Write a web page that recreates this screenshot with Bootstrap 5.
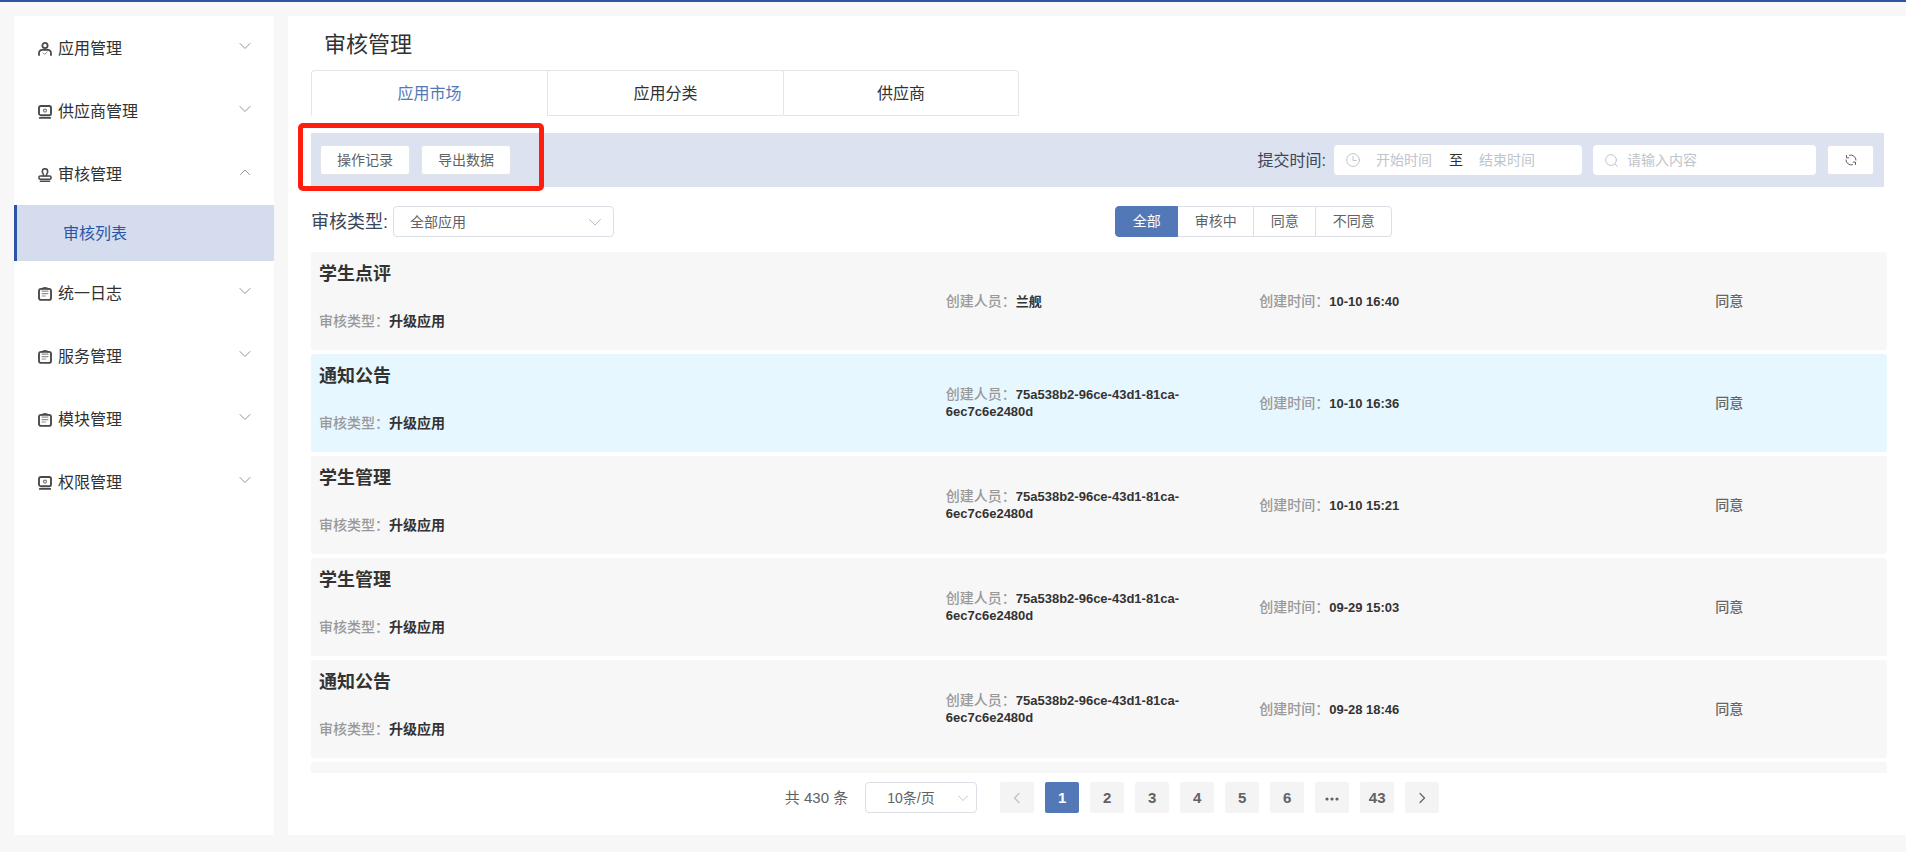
<!DOCTYPE html>
<html lang="zh-CN">
<head>
<meta charset="utf-8">
<meta name="viewport" content="width=device-width, initial-scale=1">
<title>审核管理</title>
<link href="https://cdn.jsdelivr.net/npm/bootstrap@5.3.0/dist/css/bootstrap.min.css" rel="stylesheet">
<style>
  :root { --brand: #2a55a5; --accent: #5278b8; --line: #dcdfe6; --muted: #c0c4cc; --ink: #303133; --soft: #606266; }
  body { background: #f7f7f7; color: var(--ink); font-family: "Liberation Sans", "Noto Sans CJK SC", sans-serif; font-size: 14px; line-height: 20px; }
  svg { display: block; flex: none; fill: none; stroke: currentColor; stroke-linecap: round; stroke-linejoin: round; }

  .shell { gap: 14px; padding: 14px 0 17px 14px; border-top: 2px solid var(--brand); }
  .side { width: 260px; }
  .side-item { height: 63px; padding: 2px 23px 0 24px; gap: 6px; font-size: 16px; color: var(--ink); }
  .side-item .glyph { color: #4a4a4a; }
  .side-item .arrow { color: #909399; margin: 0 0 6px auto; }
  .side-sub { height: 56px; padding: 2px 0 0 46px; border-left: 3px solid var(--brand); background: #d4dced; color: var(--brand); font-size: 16px; }

  .panel { padding: 17px 19px 22px 23px; min-width: 0; }
  .panel h1 { font-size: 22px; line-height: 24px; padding-left: 13px; margin-bottom: 13px; font-weight: 400; }

  .tabs .nav-link { width: 236px; height: 46px; padding: 2px 0 0; border: 1px solid #e4e4ec; border-right-width: 0; border-radius: 0; margin: 0; background: #fff; font-size: 16px; color: var(--ink); }
  .tabs .nav-item:first-child .nav-link { border-top-left-radius: 4px; }
  .tabs .nav-item:last-child .nav-link { border-top-right-radius: 4px; border-right-width: 1px; }
  .tabs .nav-link.active { color: var(--accent); border-bottom-color: #fff; }

  .tools { height: 54px; margin: 17px 3px 19px 0; padding: 0 10px 0 9px; background: #dce2f0; gap: 11px; }
  .tools .btn { height: 30px; padding: 0 16px; border: 1px solid #e0e3ea; border-radius: 3px; background: #fff; color: var(--soft); font-size: 14px; line-height: 20px; }
  .tools label { font-size: 16px; color: #3a4658; margin-right: -3px; padding-top: 2px; }
  .callout-frame { left: -13px; top: -10px; width: 246px; height: 68px; border: 5px solid #ff1d0f; border-radius: 5px; pointer-events: none; }
  .field { height: 30px; background: #fff; border-radius: 4px; padding: 0 12px; color: var(--muted); }
  .field input { border: 0; padding: 0; background: transparent; font-size: 14px; outline: 0; min-width: 0; color: var(--soft); }
  .field input::placeholder { color: var(--muted); opacity: 1; }
  .range { width: 248px; gap: 16px; }
  .range input { width: 57px; }
  .range span { color: var(--ink); }
  .search { width: 223px; gap: 9px; }
  .tools .reload { width: 47px; }

  .filter-type { width: 51%; gap: 5px; }
  .filter-type label { font-size: 18px; color: #3a4658; }
  .picker { height: 31px; border: 1px solid var(--line); border-radius: 4px; color: var(--soft); font-size: 14px; line-height: 20px; padding: 0 32px 0 16px; background-size: 12px 12px; background-position: right 12px center;
    --bs-form-select-bg-img: url("data:image/svg+xml,%3csvg xmlns='http://www.w3.org/2000/svg' viewBox='0 0 12 12' fill='none' stroke='%23b4b9c2' stroke-linecap='round'%3e%3cpath d='M.6 3.500 6 9l5.400-5.500'/%3e%3c/svg%3e"); }
  .picker-type { width: 221px; }
  .picker-size { width: 112px; padding-left: 21px; background-position: right 8px center; margin: 0 12px 0 6px; background-size: 10px 10px; }
  .states .btn { height: 31px; padding: 0 16px 0 17px; border: 1px solid var(--line); border-radius: 4px; color: var(--soft); font-size: 14px; line-height: 29px; --bs-btn-active-bg: var(--accent); --bs-btn-active-color: #fff; }
  .states .btn-check:checked + .btn { border-color: var(--accent); }

  .records { margin: 15px 0 9px; flex: 1 1 0; min-height: 0; }
  .record { display: grid; grid-template-columns: 2fr 1fr 1fr 1fr; height: 98px; margin-bottom: 4px; padding: 0 1px 0 8px; background: #f7f7f7; border-radius: 3px; line-height: 16px; font-weight: 700; color: #333; }
  .record.current { background: #e7f7ff; }
  .record h2 { font-size: 18px; line-height: 24px; margin-bottom: 27px; padding-top: 10px; font-weight: 700; }
  .record .key { color: #999; font-weight: 500; }
  .record .val { font-size: 13px; }
  .record .state { color: #666; font-weight: 500; }

  .pager { gap: 11px; padding-left: 26px; color: var(--soft); font-size: 15px; }
  .pager .pagination { gap: 11px; }
  .pager .page-item .page-link { width: 34px; height: 31px; margin: 0; padding: 0; border: 0; border-radius: 2px; background: #f4f4f5; color: var(--soft); font-weight: 700; font-size: 15px; }
  .pager .page-item.active .page-link { background: var(--accent); color: #fff; }
  .pager .page-item.disabled .page-link { color: var(--muted); }
</style>
</head>
<body>
<svg class="d-none">
  <symbol id="i-user" viewBox="0 0 14 14"><circle cx="7" cy="3.500" r="2.600" stroke-width="1.800"/><path d="M1 13v-1.500C1 9 2.500 7.800 4.300 7.800h5.400C11.500 7.800 13 9 13 11.500V13" stroke-width="1.800"/><path d="m5 10.800 1.600 1.600L9.200 10" stroke-width=".9" opacity=".7"/></symbol>
  <symbol id="i-screen" viewBox="0 0 14 14"><rect x="1" y="1" width="12" height="9.200" rx="1.800" stroke-width="1.900"/><circle cx="7" cy="5.600" r="1.500" stroke-width="1.300" opacity=".7"/><path d="M1.800 12.900h10.400" stroke-width="1.900"/></symbol>
  <symbol id="i-stamp" viewBox="0 0 14 14"><path d="M5.600 8C6 6.500 4.300 5.300 4.300 3.400a2.700 2.700 0 0 1 5.400 0C9.700 5.300 8 6.500 8.400 8" stroke-width="1.600"/><rect x=".9" y="8" width="12.200" height="3.200" rx="1.500" stroke-width="1.600"/><path d="M2.400 13.200h9.200" stroke-width="1.500"/></symbol>
  <symbol id="i-note" viewBox="0 0 14 14"><rect x="1" y="1.900" width="12" height="11" rx="2" stroke-width="1.900"/><path d="M4 1.900C4.500.8 5.500.7 7 .7s2.500.1 3 1.200" stroke-width="1.400"/><path d="M4 4.200h6M4 6.600h6M4 9h3.500" stroke-width="1.200" opacity=".6"/></symbol>
  <symbol id="i-down" viewBox="0 0 12 12"><path d="m1 3.500 5 5 5-5" stroke-width="1"/></symbol>
  <symbol id="i-up" viewBox="0 0 12 12"><path d="m1.500 8.500 4.500-4.500 4.500 4.500" stroke-width="1"/></symbol>
</svg>

<div class="shell d-flex vh-100">
  <nav class="side bg-white flex-shrink-0" aria-label="主菜单">
    <button class="side-item btn border-0 rounded-0 w-100 d-flex align-items-center" type="button"><svg class="glyph" width="14" height="14"><use href="#i-user"/></svg>应用管理<svg class="arrow" width="12" height="12"><use href="#i-down"/></svg></button>
    <button class="side-item btn border-0 rounded-0 w-100 d-flex align-items-center" type="button"><svg class="glyph" width="14" height="14"><use href="#i-screen"/></svg>供应商管理<svg class="arrow" width="12" height="12"><use href="#i-down"/></svg></button>
    <button class="side-item btn border-0 rounded-0 w-100 d-flex align-items-center" type="button" aria-expanded="true"><svg class="glyph" width="14" height="14"><use href="#i-stamp"/></svg>审核管理<svg class="arrow" width="12" height="12"><use href="#i-up"/></svg></button>
    <a class="side-sub d-flex align-items-center text-decoration-none" href="#" aria-current="page">审核列表</a>
    <button class="side-item btn border-0 rounded-0 w-100 d-flex align-items-center" type="button"><svg class="glyph" width="14" height="14"><use href="#i-note"/></svg>统一日志<svg class="arrow" width="12" height="12"><use href="#i-down"/></svg></button>
    <button class="side-item btn border-0 rounded-0 w-100 d-flex align-items-center" type="button"><svg class="glyph" width="14" height="14"><use href="#i-note"/></svg>服务管理<svg class="arrow" width="12" height="12"><use href="#i-down"/></svg></button>
    <button class="side-item btn border-0 rounded-0 w-100 d-flex align-items-center" type="button"><svg class="glyph" width="14" height="14"><use href="#i-note"/></svg>模块管理<svg class="arrow" width="12" height="12"><use href="#i-down"/></svg></button>
    <button class="side-item btn border-0 rounded-0 w-100 d-flex align-items-center" type="button"><svg class="glyph" width="14" height="14"><use href="#i-screen"/></svg>权限管理<svg class="arrow" width="12" height="12"><use href="#i-down"/></svg></button>
  </nav>

  <main class="panel bg-white flex-grow-1 d-flex flex-column">
    <h1>审核管理</h1>

    <ul class="tabs nav">
      <li class="nav-item"><button class="nav-link active" type="button">应用市场</button></li>
      <li class="nav-item"><button class="nav-link" type="button">应用分类</button></li>
      <li class="nav-item"><button class="nav-link" type="button">供应商</button></li>
    </ul>

    <div class="tools position-relative d-flex align-items-center">
      <button class="btn" type="button">操作记录</button>
      <button class="btn" type="button">导出数据</button>
      <div class="callout-frame position-absolute"></div>
      <label class="ms-auto" for="from">提交时间:</label>
      <div class="field range d-flex align-items-center">
        <svg width="14" height="14" viewBox="0 0 14 14"><circle cx="7" cy="7" r="6.400"/><path d="M7 3.200V7.500h3.200"/></svg>
        <input id="from" type="text" placeholder="开始时间">
        <span>至</span>
        <input type="text" placeholder="结束时间" aria-label="结束时间">
      </div>
      <div class="field search d-flex align-items-center">
        <svg width="13" height="13" viewBox="0 0 13 13"><circle cx="6" cy="6" r="5.400"/><path d="m10 10 2.400 2.400"/></svg>
        <input class="flex-grow-1" type="text" placeholder="请输入内容" aria-label="搜索">
      </div>
      <button class="btn reload d-flex align-items-center justify-content-center" type="button" aria-label="刷新">
        <svg width="12" height="12" viewBox="0 0 12 12"><path d="M1.500 1.500v2.400h2.300M10.500 10.500V8.100H8.200M4.500 1.200A5 5 0 0 1 11 6M7.500 10.800A5 5 0 0 1 1 6"/></svg>
      </button>
    </div>

    <div class="d-flex align-items-center">
      <div class="filter-type d-flex align-items-center">
        <label for="kind">审核类型:</label>
        <select id="kind" class="form-select picker picker-type"><option>全部应用</option></select>
      </div>
      <div class="states btn-group" role="group" aria-label="审核状态">
        <input class="btn-check" type="radio" name="state" id="s0" checked><label class="btn" for="s0">全部</label>
        <input class="btn-check" type="radio" name="state" id="s1"><label class="btn" for="s1">审核中</label>
        <input class="btn-check" type="radio" name="state" id="s2"><label class="btn" for="s2">同意</label>
        <input class="btn-check" type="radio" name="state" id="s3"><label class="btn" for="s3">不同意</label>
      </div>
    </div>

    <ul class="records list-unstyled overflow-hidden">
      <li class="record align-items-center">
        <div class="align-self-start"><h2>学生点评</h2><span class="key">审核类型：</span>升级应用</div>
        <div><span class="key">创建人员：</span><span class="val">兰舰</span></div>
        <div><span class="key">创建时间：</span><span class="val">10-10 16:40</span></div>
        <div class="state text-center">同意</div>
      </li>
      <li class="record current align-items-center">
        <div class="align-self-start"><h2>通知公告</h2><span class="key">审核类型：</span>升级应用</div>
        <div><span class="key">创建人员：</span><span class="val">75a538b2-96ce-43d1-81ca-<wbr>6ec7c6e2480d</span></div>
        <div><span class="key">创建时间：</span><span class="val">10-10 16:36</span></div>
        <div class="state text-center">同意</div>
      </li>
      <li class="record align-items-center">
        <div class="align-self-start"><h2>学生管理</h2><span class="key">审核类型：</span>升级应用</div>
        <div><span class="key">创建人员：</span><span class="val">75a538b2-96ce-43d1-81ca-<wbr>6ec7c6e2480d</span></div>
        <div><span class="key">创建时间：</span><span class="val">10-10 15:21</span></div>
        <div class="state text-center">同意</div>
      </li>
      <li class="record align-items-center">
        <div class="align-self-start"><h2>学生管理</h2><span class="key">审核类型：</span>升级应用</div>
        <div><span class="key">创建人员：</span><span class="val">75a538b2-96ce-43d1-81ca-<wbr>6ec7c6e2480d</span></div>
        <div><span class="key">创建时间：</span><span class="val">09-29 15:03</span></div>
        <div class="state text-center">同意</div>
      </li>
      <li class="record align-items-center">
        <div class="align-self-start"><h2>通知公告</h2><span class="key">审核类型：</span>升级应用</div>
        <div><span class="key">创建人员：</span><span class="val">75a538b2-96ce-43d1-81ca-<wbr>6ec7c6e2480d</span></div>
        <div><span class="key">创建时间：</span><span class="val">09-28 18:46</span></div>
        <div class="state text-center">同意</div>
      </li>
      <li class="record"></li>
    </ul>

    <div class="pager d-flex justify-content-center align-items-center">
      <span>共 430 条</span>
      <select class="form-select picker picker-size" aria-label="每页条数"><option>10条/页</option></select>
      <ul class="pagination mb-0">
        <li class="page-item disabled"><a class="page-link d-flex align-items-center justify-content-center" aria-label="上一页"><svg width="12" height="12" viewBox="0 0 12 12"><path d="M8 1.500 3.500 6 8 10.500" stroke-width="1.500"/></svg></a></li>
        <li class="page-item active"><a class="page-link d-flex align-items-center justify-content-center" href="#" aria-current="page">1</a></li>
        <li class="page-item"><a class="page-link d-flex align-items-center justify-content-center" href="#">2</a></li>
        <li class="page-item"><a class="page-link d-flex align-items-center justify-content-center" href="#">3</a></li>
        <li class="page-item"><a class="page-link d-flex align-items-center justify-content-center" href="#">4</a></li>
        <li class="page-item"><a class="page-link d-flex align-items-center justify-content-center" href="#">5</a></li>
        <li class="page-item"><a class="page-link d-flex align-items-center justify-content-center" href="#">6</a></li>
        <li class="page-item"><a class="page-link d-flex align-items-center justify-content-center" href="#" aria-label="向后翻页"><svg width="14" height="14" viewBox="0 0 14 14"><path d="M2 8h.01M7 8h.01M12 8h.01" stroke-width="3.200"/></svg></a></li>
        <li class="page-item"><a class="page-link d-flex align-items-center justify-content-center" href="#">43</a></li>
        <li class="page-item"><a class="page-link d-flex align-items-center justify-content-center" href="#" aria-label="下一页"><svg width="12" height="12" viewBox="0 0 12 12"><path d="M4 1.500 8.500 6 4 10.500" stroke-width="1.200"/></svg></a></li>
      </ul>
    </div>
  </main>
</div>
<script src="https://cdn.jsdelivr.net/npm/bootstrap@5.3.0/dist/js/bootstrap.bundle.min.js"></script>
</body>
</html>
